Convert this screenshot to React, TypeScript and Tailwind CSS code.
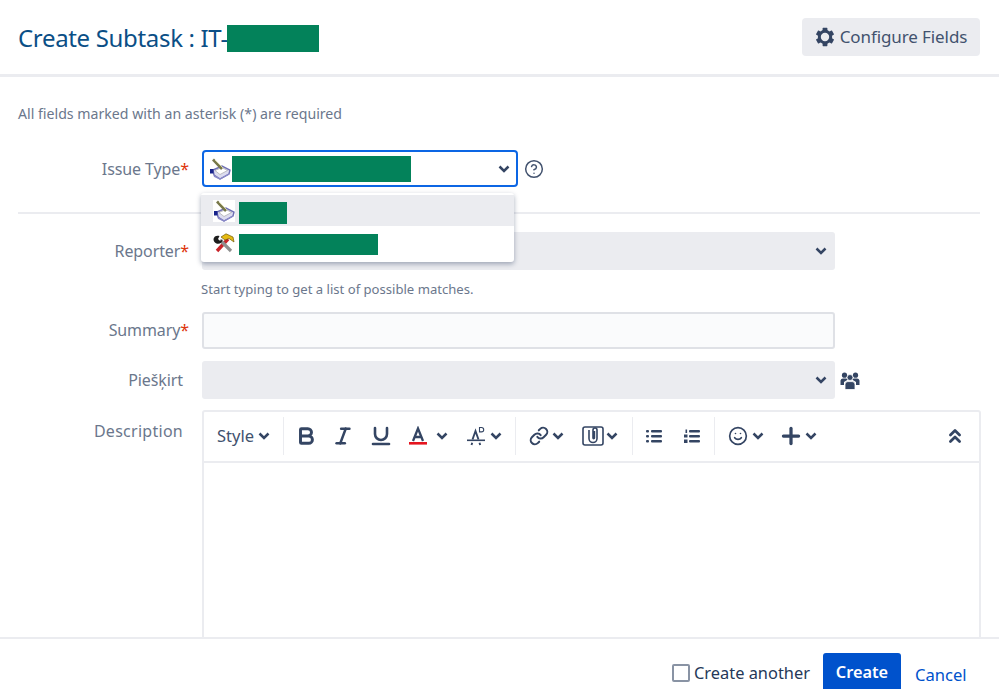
import { Bold, ChevronsUp, CircleHelp, Italic, Link, Plus, Smile, Underline } from 'lucide-react';

const Redacted = ({ className }: { className: string }) => <span className={`block shrink-0 bg-[#03825a] ${className}`} />;

const Chevron = ({ className = '' }: { className?: string }) => (
  <svg width="12" height="8" viewBox="0 0 12 8" fill="none" className={`shrink-0 ${className}`}>
    <path d="M1.5 1.5 L6 6 L10.5 1.5" stroke="#344563" strokeWidth="2.5" />
  </svg>
);

// keeps the toolbar spacing fixed whatever the icon's own box is
const Slot = ({ className, children }: { className: string; children: React.ReactNode }) => (
  <span className={`flex shrink-0 items-center justify-center ${className}`}>{children}</span>
);

const TaskIcon = () => (
  <svg width="22" height="22" viewBox="0 0 22 22" className="shrink-0 bg-white">
    <path d="M4 12 L13 8 L21 12 L20 16 L11 21 L5 17 Z" fill="#dcdcf0" stroke="#6f6fb4" strokeWidth="1.4" />
    <path d="M6 12.5 L13 9.5 L18.5 12.5 L11 16.5 Z" fill="#ffffff" stroke="#a8a8a8" strokeWidth="0.7" />
    <path d="M4 1.5 L13 11" stroke="#77774a" strokeWidth="2.6" />
    <path d="M6 2 L14 10" stroke="#d4d4a8" strokeWidth="1" />
    <path d="M1 11 h3.5 v4.5 h-3.5 z" fill="#18248c" />
    <path d="M5 18 L11 21 L20 16" fill="none" stroke="#8a8ac8" strokeWidth="1.4" />
  </svg>
);

const ToolsIcon = () => (
  <svg width="22" height="20" viewBox="0 0 22 20" className="shrink-0">
    <path d="M4 18 L15 6" stroke="#c8242a" strokeWidth="3.4" />
    <path d="M8 4 L13 0.8 L20 4 L21 9 L16 5.5 L12 7 Z" fill="#e6bb12" stroke="#6e5a08" strokeWidth="0.7" />
    <path d="M18 18 L7 7" stroke="#8f8f8f" strokeWidth="3.2" />
    <path d="M0.5 6 C1 3 4 2 6.5 3 L5 6 L7 8 L9.5 6.5 C9.5 10 6 11.5 3.5 10.5 C1.5 10 0.5 8 0.5 6 Z" fill="#1d1d1d" />
  </svg>
);

const GearIcon = () => (
  <svg width="20" height="20" viewBox="0 0 20 20" fill="#344563" className="shrink-0">
    {[0, 60, 120, 180, 240, 300].map((a) => (
      <rect key={a} x="7.6" y="0.8" width="4.8" height="4" rx="0.6" transform={`rotate(${a} 10 10)`} />
    ))}
    <circle cx="10" cy="10" r="5.7" fill="none" stroke="#344563" strokeWidth="3" />
  </svg>
);

const UsersIcon = () => (
  <svg width="20" height="18" viewBox="0 0 20 18" fill="#344563" className="shrink-0">
    <circle cx="4.5" cy="3.2" r="2.6" />
    <circle cx="15.5" cy="3.2" r="2.6" />
    <path d="M0.5 13 V8.5 A2.5 2.5 0 0 1 3 6.5 H6 A2.5 2.5 0 0 1 8 7.5 L4 10 V13 Z" />
    <path d="M19.5 13 V8.5 A2.5 2.5 0 0 0 17 6.5 H14 A2.5 2.5 0 0 0 12 7.5 L16 10 V13 Z" />
    <circle cx="10" cy="5.5" r="3" stroke="#fff" strokeWidth="0.8" />
    <path d="M5 17.5 V12 A2.8 2.8 0 0 1 7.8 9.6 H12.2 A2.8 2.8 0 0 1 15 12 V17.5 Z" stroke="#fff" strokeWidth="0.8" />
  </svg>
);

const TextColorIcon = () => (
  <svg width="20" height="20" viewBox="0 0 20 20" fill="none" className="shrink-0">
    <path d="M5 15 L10 2.5 L15 15 M6.8 11 H13.2" stroke="#344563" strokeWidth="2.3" />
    <rect x="1" y="16" width="18" height="2.6" fill="#e5141f" />
  </svg>
);

const ClearFormatIcon = () => (
  <svg width="20" height="20" viewBox="0 0 20 20" fill="none" className="shrink-0">
    <path d="M5.5 19 L6.2 16.8 M13.5 16.8 L14.2 19 M6.5 13.5 L9.5 5 L12.5 13.5" stroke="#344563" strokeWidth="1.9" />
    <path d="M1 14.3 H19" stroke="#344563" strokeWidth="1.6" />
    <path d="M13.5 1.5 h2 a2 2 0 0 1 0 4.4 h-2 z" stroke="#344563" strokeWidth="1.1" />
  </svg>
);

const AttachIcon = () => (
  <svg width="22" height="22" viewBox="0 0 22 22" fill="none" stroke="#344563" className="shrink-0">
    <rect x="1" y="2" width="20" height="18" rx="2" strokeWidth="1.6" />
    <path d="M7 5 V13.5 A4 4 0 0 0 15 13.5 V5 A2 2 0 0 0 11 5 V13 A0.7 0.7 0 0 0 12.4 13 V6" strokeWidth="1.6" />
  </svg>
);

const BulletIcon = () => (
  <svg width="16" height="14" viewBox="0 0 16 14" fill="#344563" className="shrink-0">
    <rect x="0" y="1" width="3" height="2.4" rx="1" />
    <rect x="0" y="6" width="3" height="2.4" rx="1" />
    <rect x="0" y="11" width="3" height="2.4" rx="1" />
    <rect x="5" y="1" width="11" height="2.4" rx="1" />
    <rect x="5" y="6" width="11" height="2.4" rx="1" />
    <rect x="5" y="11" width="11" height="2.4" rx="1" />
  </svg>
);

const NumberIcon = () => (
  <svg width="16" height="14" viewBox="0 0 16 14" fill="#344563" className="shrink-0">
    <rect x="1.5" y="0.5" width="1.6" height="3.5" />
    <rect x="0" y="5.5" width="3.5" height="3" />
    <rect x="0" y="10.5" width="3.5" height="3.5" />
    <rect x="5" y="1" width="11" height="2.4" rx="1" />
    <rect x="5" y="6" width="11" height="2.4" rx="1" />
    <rect x="5" y="11" width="11" height="2.4" rx="1" />
  </svg>
);

const Sep = ({ className }: { className: string }) => <span className={`h-[38px] w-px shrink-0 bg-[#ebecf0] ${className}`} />;

const Row = ({ label, required, children }: { label: string; required?: boolean; children: React.ReactNode }) => (
  <div className="flex items-center">
    <label className="w-[190px] pr-[1px] text-right text-[16px] tracking-[-0.1px] text-[#6b778c]">
      {label}
      {required ? <span className="text-[#de350b]">*</span> : <span className="inline-block w-[6px]" />}
    </label>
    {children}
  </div>
);

const GraySelect = () => (
  <div className="ml-[12px] flex h-[38px] w-[633px] items-center justify-end rounded-[3px] bg-[#ebecf0] pr-[8px]">
    <Chevron />
  </div>
);

export default function App() {
  return (
    <div className="flex h-[689px] w-[999px] flex-col overflow-hidden bg-white font-['Noto_Sans','Open_Sans',sans-serif]">
      <header className="flex h-[77px] shrink-0 items-center justify-between border-b-[3px] border-[#ebecf0] pl-[18px] pr-[19px]">
        <h1 className="mt-[2px] flex items-center text-[24px] font-normal tracking-[-0.33px] text-[#0b4f86]">
          Create Subtask : IT-
          <Redacted className="ml-[-1px] h-[27px] w-[92px]" />
        </h1>
        <button className="flex h-[38px] w-[178px] items-center justify-center gap-[5px] rounded-[4px] bg-[#ebecf0] text-[17px] tracking-[-0.1px] text-[#42526e]">
          <GearIcon />
          Configure Fields
        </button>
      </header>

      <main className="relative min-h-0 flex-1 overflow-hidden px-[18px] pt-[27px]">
        <p className="text-[14.15px] leading-[20px] text-[#6b778c]">All fields marked with an asterisk (*) are required</p>

        <div className="-ml-[18px] mt-[26px]">
          <Row label="Issue Type" required>
            <div className="ml-[12px] flex h-[37px] w-[316px] shrink-0 items-center rounded-[4px] border-2 border-[#0c66e4] pl-[5px] pr-[6px]">
              <TaskIcon />
              <Redacted className="ml-[1px] h-[26px] w-[179px]" />
              <Chevron className="ml-auto" />
            </div>
            <CircleHelp size={20} strokeWidth={1.8} className="ml-[6px] text-[#42526e]" />
          </Row>
        </div>

        <div className="mt-[25px] h-[1.5px] w-[962px] bg-[#ebecf0]" />

        <div className="-ml-[18px] mt-[18px]">
          <Row label="Reporter" required>
            <GraySelect />
          </Row>
          <p className="ml-[201px] mt-[10px] text-[13.1px] leading-[18px] text-[#6b778c]">Start typing to get a list of possible matches.</p>
          <div className="mt-[14px]">
            <Row label="Summary" required>
              <input className="ml-[12px] h-[37px] w-[633px] rounded-[3px] border-2 border-[#dfe1e6] bg-[#fafbfc]" />
            </Row>
          </div>
          <div className="mt-[12px]">
            <Row label="Piešķirt">
              <GraySelect />
              <span className="ml-[5px] mt-[2px]"><UsersIcon /></span>
            </Row>
          </div>
          <div className="mt-[11px] flex">
            <label className="w-[190px] pr-[7px] pt-[9px] text-right text-[16px] tracking-[0.27px] text-[#6b778c]">Description</label>
            <div className="ml-[12px] h-[300px] w-[779px] shrink-0 rounded-[3px] border-2 border-[#ebecf0]">
              <div className="flex h-[51px] items-center border-b-2 border-[#ebecf0] pl-[13px] pr-[15px] text-[#344563]">
                <span className="text-[16.5px] text-[#42526e]">Style</span>
                <Chevron className="ml-[4px]" />
                <Sep className="ml-[13px]" />
                <Slot className="ml-[12px] w-[20px]"><Bold size={22} strokeWidth={3.2} className="shrink-0" /></Slot>
                <Slot className="ml-[17px] w-[20px]"><Italic size={22} strokeWidth={2.8} className="shrink-0" /></Slot>
                <Slot className="ml-[18px] w-[20px]"><Underline size={24} strokeWidth={2.6} className="shrink-0" /></Slot>
                <Slot className="ml-[17px] w-[20px]"><TextColorIcon /></Slot>
                <Chevron className="ml-[8px]" />
                <Slot className="ml-[18px] w-[20px]"><ClearFormatIcon /></Slot>
                <Chevron className="ml-[4px]" />
                <Sep className="ml-[13px]" />
                <Slot className="ml-[13px] w-[20px]"><Link size={20} strokeWidth={2.4} className="shrink-0" /></Slot>
                <Chevron className="ml-[3px]" />
                <Slot className="ml-[18px] w-[22px]"><AttachIcon /></Slot>
                <Chevron className="ml-[2px]" />
                <Sep className="ml-[14px]" />
                <Slot className="ml-[13px] w-[16px]"><BulletIcon /></Slot>
                <Slot className="ml-[22px] w-[16px]"><NumberIcon /></Slot>
                <Sep className="ml-[14px]" />
                <Slot className="ml-[13px] w-[20px]"><Smile size={20} strokeWidth={2} className="shrink-0" /></Slot>
                <Chevron className="ml-[4px]" />
                <Slot className="ml-[16px] w-[22px]"><Plus size={26} strokeWidth={3} className="shrink-0" /></Slot>
                <Chevron className="ml-[3px]" />
                <Slot className="ml-auto w-[18px]"><ChevronsUp size={22} strokeWidth={3} className="shrink-0" /></Slot>
              </div>
            </div>
          </div>
        </div>

        {/* open issue type list, sits over the form */}
        <div className="absolute left-[201px] top-[116px] w-[313px] rounded-[3px] bg-white py-[2px] shadow-[0_2px_5px_rgba(9,30,66,0.35)]">
          <div className="flex h-[31px] items-center bg-[#ebecf0] pl-[12px]">
            <TaskIcon />
            <Redacted className="ml-[4px] mt-[4px] h-[22px] w-[48px]" />
          </div>
          <div className="flex h-[34px] items-center pl-[12px]">
            <ToolsIcon />
            <Redacted className="ml-[4px] mt-[3px] h-[21px] w-[139px]" />
          </div>
        </div>
      </main>

      <footer className="flex h-[52px] shrink-0 items-start border-t-2 border-[#ebecf0] bg-white pl-[672px]">
        <span className="mt-[25px] h-[18px] w-[18px] rounded-[2px] border-[2.5px] border-[#8993a4]" />
        <span className="ml-[4px] mt-[22px] text-[16.4px] leading-[24px] text-[#253858]">Create another</span>
        <button className="ml-[13px] mt-[14px] h-[45px] w-[78px] rounded-[3px] bg-[#0052cc] pb-[6px] text-[16.3px] font-semibold text-white">Create</button>
        <a className="ml-[14px] mt-[24px] text-[16.6px] leading-[24px] text-[#0052cc]">Cancel</a>
      </footer>
    </div>
  );
}
